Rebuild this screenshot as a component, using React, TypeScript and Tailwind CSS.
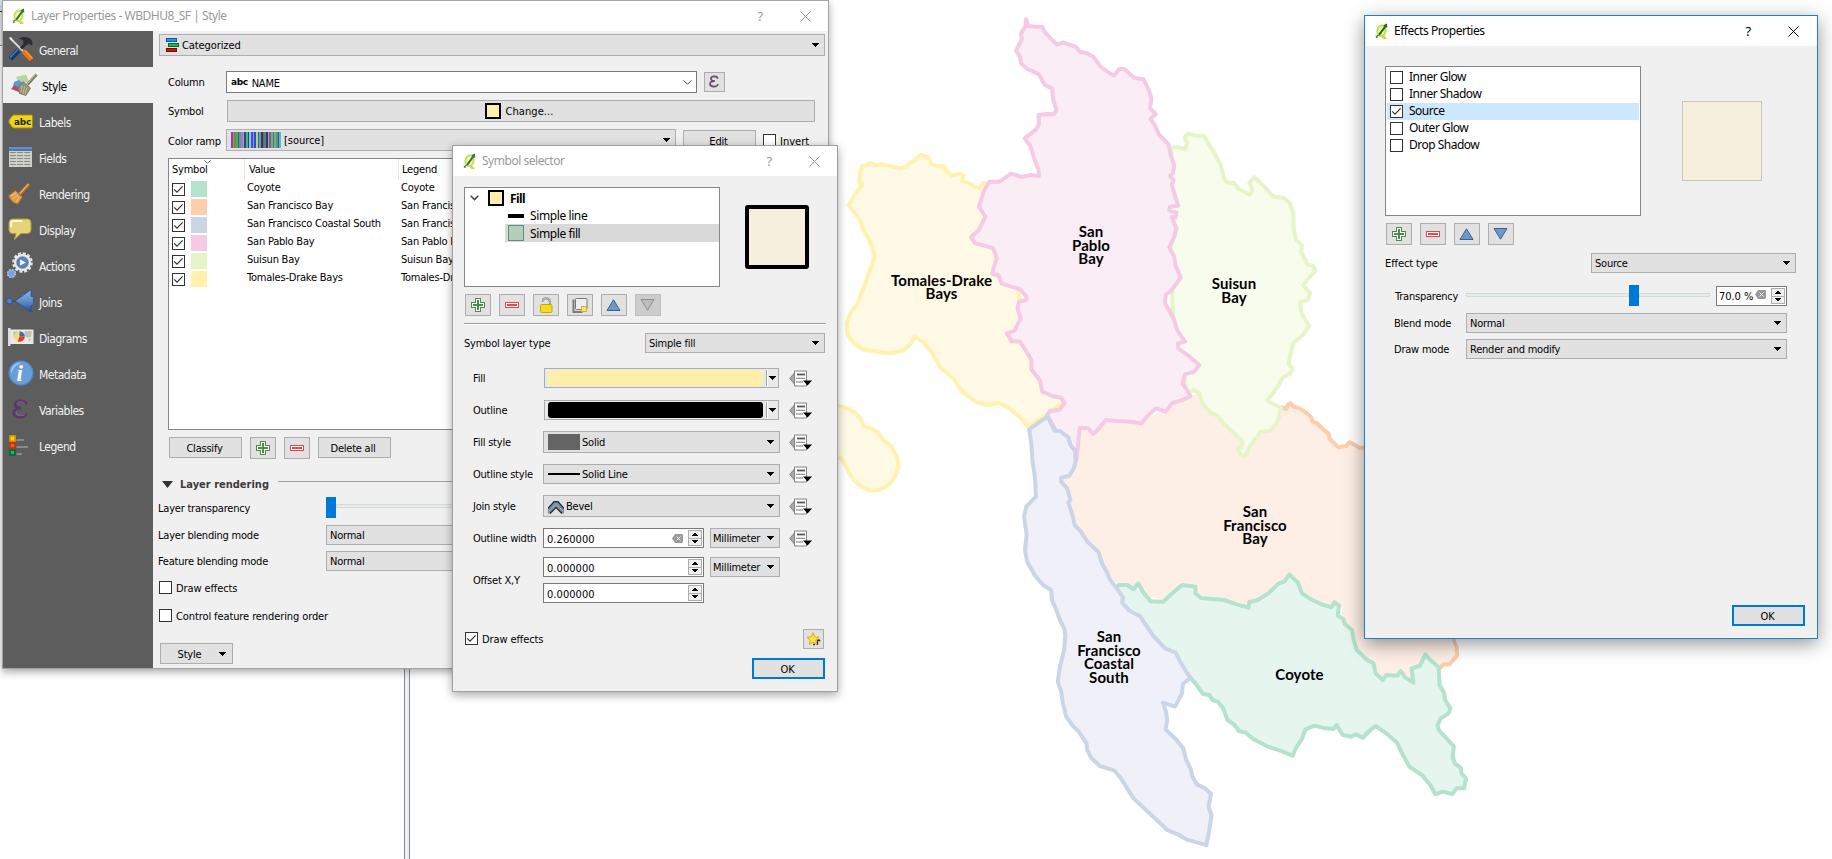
import React from "react";

/* ---------- shared pieces ---------- */

function Caret({ className = "" }: { className?: string }) {
  return (
    <svg className={`block h-1 w-[7px] shrink-0 ${className}`} viewBox="0 0 7 4" shapeRendering="crispEdges">
      <path d="M0 0h7v1h-1v1h-1v1h-1v1h-1v-1h-1v-1h-1v-1h-1z" fill="#000" />
    </svg>
  );
}

function Combo({ className, children }: { className: string; children: React.ReactNode }) {
  return (
    <div className={`flex shrink-0 items-center border border-[#adadad] bg-[#e1e1e1] ${className}`}>
      {children}
      <Caret className="ml-auto" />
    </div>
  );
}

function Button({ className, children }: { className: string; children: React.ReactNode }) {
  return (
    <div className={`flex shrink-0 items-center justify-center border border-[#adadad] bg-[#e1e1e1] ${className}`}>
      {children}
    </div>
  );
}

function Check({ on = false, className = "" }: { on?: boolean; className?: string }) {
  return (
    <span className={`block h-[13px] w-[13px] shrink-0 border border-[#333] bg-white ${className}`}>
      {on && (
        <svg className="block h-[11px] w-[11px]" viewBox="0 0 11 11">
          <path d="M1.2 5.3l2.8 2.8 5.6-5.8" fill="none" stroke="#333" strokeWidth="1.2" />
        </svg>
      )}
    </span>
  );
}

function Logo({ faded = false }: { faded?: boolean }) {
  return (
    <svg className={`block h-[17px] w-[14px] shrink-0 ${faded ? "opacity-90" : ""}`} viewBox="0 0 14 17">
      <ellipse cx="6.500" cy="7.800" rx="4" ry="5.300" transform="rotate(12 6.500 7.800)" fill="#f2f6bd" stroke="#cbdc45" strokeWidth="2.200" />
      <path d="M6 13l2.500 3h3.500l-2.500-3.200z" fill="#c3d63a" />
      <path d="M12 .5l.3 4.300-1.300-.5-5.500 7.400-2.300 1.200.6-2.500 5.600-7.300-1.200-.8z" fill="#1d6b21" />
      <path d="M1 12.500l1.700 2M3 12l-2 3" stroke="#1d4d21" strokeWidth=".9" />
    </svg>
  );
}

function TitleBar({ title, active = false, pad }: { title: string; active?: boolean; pad: string }) {
  const tone = active ? "text-black" : "text-[#999]";
  return (
    <div className={`flex h-[30px] shrink-0 items-center bg-white ${pad} ${tone}`}>
      <Logo faded={!active} />
      <span className="ml-[5px] font-['Noto_Sans',sans-serif] text-[12px] leading-none tracking-[-0.47px] whitespace-pre">{title}</span>
      <span className="ml-auto font-['Noto_Sans',sans-serif] text-[13px] leading-none">?</span>
      <svg className="ml-[37px] block h-[11px] w-[11px]" viewBox="0 0 11 11">
        <path d="M.5.5l10 10M10.500.5l-10 10" stroke="currentColor" strokeWidth="1" />
      </svg>
    </div>
  );
}

function PlusIcon() {
  return (
    <svg className="block h-[14px] w-[14px]" viewBox="0 0 14 14" shapeRendering="crispEdges">
      <path d="M4.500.5h5v4h4v5h-4v4h-5v-4h-4v-5h4z" fill="#fff" stroke="#4d8c4d" />
      <path d="M6 2h2v4h4v2H8v4H6V8H2V6h4z" fill="#4d8c4d" />
    </svg>
  );
}

function MinusIcon() {
  return (
    <svg className="block h-[6px] w-[14px]" viewBox="0 0 14 6" shapeRendering="crispEdges">
      <path d="M.5.5h13v5H.5z" fill="#fff" stroke="#e8474b" />
      <path d="M2 2h10v2H2z" fill="#f0474b" />
    </svg>
  );
}

function Tri({ down = false, off = false }: { down?: boolean; off?: boolean }) {
  return (
    <svg className={`block h-3 w-[15px] ${down ? "rotate-180" : ""}`} viewBox="0 0 15 12">
      <path d="M7.500.8l6.500 10.700H1z" fill={off ? "#bdbdbd" : "#6d98cd"} stroke={off ? "#8e8e8e" : "#3f5f87"} strokeWidth="1" />
    </svg>
  );
}

function LockIcon() {
  return (
    <svg className="block h-4 w-4" viewBox="0 0 16 16">
      <path d="M5 4.800V3.500Q5.500 1 8.500 1.300T12 4.500V8" fill="none" stroke="#8f8f8f" strokeWidth="2.200" />
      <path d="M5 4.800V3.500Q5.500 1 8.500 1.300T12 4.500V8" fill="none" stroke="#c9c9c9" strokeWidth=".8" />
      <rect x="2.500" y="7.500" width="11.500" height="8" rx="1" fill="#f2dc1f" stroke="#c8a800" />
    </svg>
  );
}

function CopyIcon() {
  return (
    <svg className="block h-4 w-4" viewBox="0 0 16 16">
      <path d="M1.500 2.500v12.500h9" fill="none" stroke="#7b7b7b" strokeWidth="2" />
      <rect x="3.500" y="1.500" width="11.500" height="11" rx="1" fill="#efefef" stroke="#777" />
      <rect x="9.500" y="9.500" width="5" height="5" fill="#f8e27a" stroke="#d8b12e" />
    </svg>
  );
}

function DefinedIcon() {
  return (
    <svg className="ml-[9px] block h-[17px] w-6 shrink-0" viewBox="0 0 24 17">
      <path d="M.7 8.500L5.500 2.800v11.400z" fill="#a8a8a8" stroke="#777" strokeWidth=".8" />
      <path d="M5.500 1h12v15h-12z" fill="#fff" stroke="#828282" />
      <path d="M8 4.500h8" stroke="#555" strokeWidth="1.800" />
      <path d="M7 8.300h9M7 12h7" stroke="#777" strokeWidth="1" />
      <path d="M14 10.500h9l-4.500 5z" fill="#000" />
    </svg>
  );
}

function Spinner() {
  return (
    <span className="flex h-[16px] w-[14px] shrink-0 flex-col border border-[#adadad] bg-[#f0f0f0]">
      <svg className="block h-[14px] w-3" viewBox="0 0 12 14" shapeRendering="crispEdges">
        <path d="M5 2h2v1h1v1h1v1H3V4h1V3h1z M3 9h6v1H8v1H7v1H5v-1H4v-1H3z" fill="#000" />
        <path d="M0 7h12" stroke="#adadad" />
      </svg>
    </span>
  );
}

function ClearIcon({ className = "" }: { className?: string }) {
  return (
    <svg className={`block h-[9px] w-[11px] shrink-0 ${className}`} viewBox="0 0 11 9">
      <path d="M0 4.500L3 0h7l1 1v7l-1 1H3z" fill="#9a9a9a" />
      <path d="M4.500 2.500l4 4M8.500 2.500l-4 4" stroke="#eee" strokeWidth="1" />
    </svg>
  );
}

function EpsilonIcon({ className, light = false }: { className: string; light?: boolean }) {
  return (
    <svg className={`block ${className}`} viewBox="0 0 16 20">
      <path
        d="M14 5.500C13.500 1 4 .3 3.200 5.200 3 8 5.500 9.200 9 9.200M9.500 9.400C3.500 9 1.500 11.500 1.600 14c.4 5.500 11.400 5.600 12.800.2"
        fill="none"
        stroke={light ? "#5b3768" : "#654a6b"}
        strokeWidth="2.700"
      />
      <path d="M13 5.200C11 2 6.500 2 5 4.500M4 13c1.200 4.500 8 4.800 9.500 1.500" fill="none" stroke="#9c86a3" strokeWidth=".6" />
    </svg>
  );
}

/* ---------- sidebar ---------- */

const icons: Record<string, React.ReactNode> = {
  General: (
    <svg className="block h-[26px] w-[26px]" viewBox="0 0 26 26">
      <path d="M2 2l13 13" stroke="#d9d9d9" strokeWidth="1.800" />
      <path d="M1 1l3 1 1 3-2-1z" fill="#fff" />
      <path d="M24.500 8.500C25 3 20 .5 15.500 1L10.500 2.500l4.500 1.500L15.500 8 12 11.500l2 2L18.500 9l3-1.500 1.500 2z" fill="#2b2d31" />
      <path d="M15.500 15l8 8.500" stroke="#f0720c" strokeWidth="5" />
      <path d="M17 14.500l7.500 8" stroke="#ffb066" strokeWidth="1" />
      <path d="M10.500 14.500L2.500 23" stroke="#123a73" strokeWidth="5" />
      <path d="M10 13.500L2 21.500" stroke="#4a80c4" strokeWidth="1.200" />
    </svg>
  ),
  Style: (
    <svg className="block h-[24px] w-[28px]" viewBox="0 0 28 24">
      <path d="M6 4l10-2.500L19 9 9 11z" fill="#b5d79b" />
      <path d="M4 9l5-2 6 5-6 5-6-3z" fill="#5a98d8" />
      <path d="M1 16l3-3.500 9 3L14 21z" fill="#b94a66" />
      <path d="M13 8.500l7.500 6.500L16 22.500 9.500 20.500 8 15z" fill="#989072" stroke="#716a52" strokeWidth=".7" />
      <path d="M12 12l-1 7M14.500 13l-1.500 8M17 14.500l-2 7" stroke="#c8c1a4" strokeWidth=".8" />
      <path d="M17.500 11.500L26.500 1.500" stroke="#7f7d66" strokeWidth="3" />
      <path d="M17.500 10.500l8.500-9.500" stroke="#c0bda6" strokeWidth="1" />
    </svg>
  ),
  Labels: (
    <svg className="block h-[15px] w-[26px]" viewBox="0 0 26 15">
      <path d="M5 1h18.500a1 1 0 011 1v11a1 1 0 01-1 1H5L1 9V6z" fill="#f2d417" stroke="#a68d08" />
      <text x="6" y="10.500" fontFamily="DejaVu Sans, sans-serif" fontSize="9" fontWeight="700" fill="#222" textLength="17" lengthAdjust="spacingAndGlyphs">abc</text>
    </svg>
  ),
  Fields: (
    <svg className="block h-[20px] w-[23px]" viewBox="0 0 24 20" preserveAspectRatio="none">
      <path d="M0 0h24v20H0z" fill="#cdd0c8" />
      <path d="M0 0h24v4H0z" fill="#4b78b4" />
      <path d="M0 1h24" stroke="#86abd8" />
      <path d="M1 5.500h22M1 8.500h22M1 11.500h22M1 14.500h22M1 17.500h22" stroke="#858883" strokeWidth="1" strokeDasharray="6 1.500" />
    </svg>
  ),
  Rendering: (
    <svg className="block h-[23px] w-[23px]" viewBox="0 0 23 23">
      <path d="M12 12L21 2" stroke="#a8682a" strokeWidth="3.800" />
      <path d="M11.500 12L20.500 2" stroke="#e5a95f" strokeWidth="1.800" />
      <path d="M7.500 8.500l7 6.500L10 22C6 22 2 18 .7 13.500z" fill="#dd9c4c" stroke="#a06a26" />
      <path d="M3 14l5-3M5 17l5-4M8 20l3-5" stroke="#f3cb94" strokeWidth=".9" />
    </svg>
  ),
  Display: (
    <svg className="block h-[23px] w-[24px]" viewBox="0 0 24 23">
      <path d="M4.500 1h15Q23 1 23 5v6.500q0 4-3.500 4H13L6.500 21.500l1.500-6H4.500q-3.500 0-3.500-4V5q0-4 3.500-4z" fill="#e5d377" stroke="#b39d3d" />
      <path d="M3 9V5.500Q3 3 6 3h8" fill="none" stroke="#fff9d8" strokeWidth="2" />
    </svg>
  ),
  Actions: (
    <svg className="block h-[27px] w-[26px]" viewBox="0 0 26 27">
      <circle cx="15.500" cy="10.500" r="9.200" fill="none" stroke="#e3e3e3" strokeWidth="2.200" strokeDasharray="3 1.817" />
      <circle cx="15.500" cy="10.500" r="7.800" fill="#dadada" stroke="#efefef" strokeWidth="1.500" />
      <circle cx="15.500" cy="10.500" r="5.600" fill="#5585c4" stroke="#3d659c" strokeWidth=".8" />
      <path d="M13 7.500l6 3-6 3z" fill="#fff" />
      <circle cx="4.500" cy="21.500" r="3.900" fill="#73a2dc" stroke="#b8c4d4" strokeWidth="1.400" strokeDasharray="2 1.060" />
    </svg>
  ),
  Joins: (
    <svg className="block h-[24px] w-[28px]" viewBox="0 0 28 24">
      <defs>
        <linearGradient id="join" x1="0" y1="0" x2="0" y2="1">
          <stop offset="0" stopColor="#8fb6e6" />
          <stop offset=".5" stopColor="#5e90d0" />
          <stop offset="1" stopColor="#1f4e93" />
        </linearGradient>
      </defs>
      <circle cx="3.500" cy="12" r="3" fill="#4f82c2" stroke="#234c85" strokeWidth=".8" />
      <path d="M6 12h4" stroke="#234c85" />
      <path d="M9 12L25 .8V7.500h2.400v9H25v6.700z" fill="url(#join)" stroke="#264f88" strokeWidth=".7" />
    </svg>
  ),
  Diagrams: (
    <svg className="block h-[18px] w-[26px]" viewBox="0 0 26 18">
      <path d="M2 1.500h23.500v14.500H2z" fill="#e9e9e6" />
      <path d="M5 4l4-1 0 5-3 2zM17 3l7 0-1 6-4 1-3-3zM20 11l3 0-1 3z" fill="#c2c2bd" />
      <path d="M0 0h2.500v18H0z" fill="#dcdcdc" />
      <circle cx="11.500" cy="8.500" r="5.300" fill="#f5dc72" />
      <path d="M11.500 8.500V3.200a5.300 5.300 0 015.300 5.300z" fill="#3f6eb5" />
      <path d="M11.500 8.500h5.300a5.300 5.300 0 01-7 5z" fill="#dd3b2f" />
    </svg>
  ),
  Metadata: (
    <svg className="block h-[26px] w-[26px]" viewBox="0 0 26 26">
      <circle cx="13" cy="13" r="12" fill="#6b9ed6" stroke="#4c86c6" strokeWidth="1.200" />
      <path d="M3 14C2 6 8 2 14 2.500 8 4 5 8 3 14z" fill="#a8c9ee" />
      <text x="8.500" y="20.500" fontFamily="Liberation Serif, serif" fontSize="23" fontWeight="700" fontStyle="italic" fill="#fff">i</text>
    </svg>
  ),
  Variables: <EpsilonIcon light className="h-[20px] w-[16px]" />,
  Legend: (
    <svg className="block h-[21px] w-[19px]" viewBox="0 0 19 21">
      <path d="M7.500 5H15M7.500 12h11.500M7.500 19H13" stroke="#9a9a9a" strokeWidth="1.600" />
      <rect x="1" y="1" width="5" height="5" fill="#ffdf00" stroke="#e6960c" strokeWidth="1.600" />
      <rect x="1" y="8" width="5" height="5" fill="#ff5a1a" stroke="#c23205" strokeWidth="1.600" />
      <rect x="1" y="15" width="5" height="5" fill="#20b46a" stroke="#06663a" strokeWidth="1.600" />
    </svg>
  ),
};

const iconPad: Record<string, string> = {
  General: "pl-[5px]",
  Style: "pl-[7px]",
  Labels: "pl-[5px]",
  Fields: "pl-[6px]",
  Rendering: "pl-[5px]",
  Display: "pl-[5px]",
  Actions: "pl-1",
  Joins: "pl-[3px]",
  Diagrams: "pl-[5px]",
  Metadata: "pl-[5px]",
  Variables: "pl-[9px]",
  Legend: "pl-[6px]",
};

function Sidebar() {
  return (
    <div className="w-[150px] shrink-0 bg-[#5d5d5d] text-[#f2f2f2]">
      {Object.keys(icons).map((name) => (
        <div key={name} className={`flex h-9 items-center ${name === "Style" ? "bg-[#f0f0f0] text-black" : ""}`}>
          <div className={`shrink-0 ${iconPad[name]} ${name === "Style" ? "w-[39px]" : "w-9"}`}>{icons[name]}</div>
          <span className="pt-1 text-[12px] tracking-[-0.5px]">{name}</span>
        </div>
      ))}
    </div>
  );
}

/* ---------- layer properties ---------- */

const classes = [
  ["Coyote", "bg-[#b3e2cd]"],
  ["San Francisco Bay", "bg-[#fdcdac]"],
  ["San Francisco Coastal South", "bg-[#cbd5e8]"],
  ["San Pablo Bay", "bg-[#f4cae4]"],
  ["Suisun Bay", "bg-[#e6f5c9]"],
  ["Tomales-Drake Bays", "bg-[#fff2ae]"],
];

const rampColors = [
  "#c21fc8", "#5bbf4e", "#7a8a2a", "#2fb67a", "#b0342a", "#29b0b6", "#e05bd2", "#5ccf7c", "#2b3fae", "#4abf52",
  "#3a2fc0", "#6fdcc0", "#7a2fe0", "#48b7d8", "#3a4ad0", "#9fe07a", "#a02ad8", "#38c46a", "#302f9f", "#d03a4f",
  "#2fa04a", "#3a2ab0", "#8aa8ef", "#c04f2f", "#3fc0a8", "#2f6fd0", "#b89a2f", "#2f9fb0", "#7030c0", "#46c8b0",
];

function ColorRamp() {
  return (
    <svg className="ml-1 block h-4 w-[50px]" viewBox="0 0 60 16" preserveAspectRatio="none" shapeRendering="crispEdges">
      {rampColors.map((c, i) => (
        <rect key={i} x={i * 2} width="2" height="16" fill={c} />
      ))}
    </svg>
  );
}

function Swatch() {
  return <span className="block h-4 w-4 shrink-0 border-2 border-black bg-[#ffefab]" />;
}

function LayerProperties() {
  return (
    <section className="absolute top-0 left-[2px] flex h-[669px] w-[827px] flex-col border border-[#a3a3a3] bg-[#f0f0f0] shadow-[0_3px_8px_rgba(0,0,0,0.35)]">
      <TitleBar title="Layer Properties - WBDHU8_SF | Style" pad="pl-[9px] pr-[17px]" />
      <div className="flex min-h-0 flex-1">
        <Sidebar />
        <div className="flex min-w-0 flex-1 flex-col">
          <Combo className="mt-[3px] ml-[6px] h-[22px] w-[666px] pr-[5px] pl-[6px]">
            <svg className="block h-[14px] w-[13px]" viewBox="0 0 13 14" shapeRendering="crispEdges">
              <path d="M.5.5h10v3H.5z" fill="#19a0c8" stroke="#1652b4" />
              <path d="M2.500 5.500h10v3h-10z" fill="#20b45e" stroke="#066a32" />
              <path d="M.5 10.500h10v3H.5z" fill="#c4170e" stroke="#7a0b06" />
            </svg>
            <span className="ml-[3px] tracking-[-0.1px]">Categorized</span>
          </Combo>

          <div className="mt-[15px] ml-[15px] flex h-[22px] items-center">
            <span className="w-[58px]">Column</span>
            <div className="flex h-[22px] w-[471px] items-center border border-[#7a7a7a] bg-white pr-1 pl-1">
              <span className="font-['DejaVu_Sans',sans-serif] text-[9px] font-bold tracking-[-0.4px]">abc</span>
              <span className="ml-1 pt-[2px]">NAME</span>
              <svg className="ml-auto block h-[5px] w-[9px]" viewBox="0 0 9 5">
                <path d="M.5.3l4 4 4-4" fill="none" stroke="#444" />
              </svg>
            </div>
            <Button className="ml-[7px] h-5 w-[21px] pr-px pb-px">
              <EpsilonIcon className="h-[13px] w-[10px]" />
            </Button>
          </div>

          <div className="mt-[7px] ml-[15px] flex h-[22px] items-center">
            <span className="w-[59px]">Symbol</span>
            <Button className="h-[22px] w-[588px] pr-[3px]">
              <Swatch />
              <span className="ml-1 tracking-[0.1px]">Change...</span>
            </Button>
          </div>

          <div className="mt-[7px] ml-[15px] flex h-[23px] items-start">
            <span className="w-[58px] pt-[6px]">Color ramp</span>
            <Combo className="h-[22px] w-[450px] pr-[5px]">
              <ColorRamp />
              <span className="ml-[3px] tracking-[-0.05px]">[source]</span>
            </Combo>
            <Button className="mt-px ml-[7px] h-[22px] w-[73px] pr-[2px]">Edit</Button>
            <Check className="mt-[5px] ml-[7px]" />
            <span className="ml-1 pt-[6px] tracking-[0px]">Invert</span>
          </div>

          <div className="mt-[6px] ml-[15px] h-[272px] w-[650px] border border-[#828790] bg-white">
            <div className="flex h-[21px] items-center">
              <div className="relative flex h-full w-[76px] items-center border-r border-[#e5e5e5] pl-[3px]">
                Symbol
                <svg className="absolute top-px left-[35px] block h-1 w-[7px]" viewBox="0 0 7 4">
                  <path d="M.3.3l3.200 3L6.700.3" fill="none" stroke="#777" />
                </svg>
              </div>
              <div className="flex h-full w-[154px] items-center border-r border-[#e5e5e5] pl-1">Value</div>
              <div className="pl-[3px]">Legend</div>
            </div>
            {classes.map(([name, color]) => (
              <div key={name} className="flex h-[18px] items-start whitespace-nowrap">
                <Check on className="mt-[3px] ml-[3px]" />
                <span className={`mt-px ml-[6px] block h-4 w-4 ${color}`} />
                <span className="ml-10 w-[154px] pt-px">{name}</span>
                <span className="pt-px">{name}</span>
              </div>
            ))}
          </div>

          <div className="mt-[7px] ml-4 flex items-start">
            <Button className="h-[21px] w-[73px] pt-px pr-[2px]">Classify</Button>
            <Button className="ml-2 h-[22px] w-[26px]"><PlusIcon /></Button>
            <Button className="ml-2 h-[22px] w-[26px]"><MinusIcon /></Button>
            <Button className="ml-2 h-[21px] w-[73px] pt-px pr-[3px]">Delete all</Button>
          </div>

          <div className="mt-[17px] ml-[9px] flex h-4 items-center">
            <svg className="block h-[7px] w-[11px]" viewBox="0 0 11 7">
              <path d="M0 0h11L5.500 7z" fill="#333" />
            </svg>
            <span className="ml-[7px] w-[98px] font-bold tracking-[0px] text-[#3b3b3b]">Layer rendering</span>
            <span className="mb-[5px] block h-px w-[540px] bg-[#a0a0a0]" />
          </div>

          <div className="mt-[5px] ml-[5px] flex h-[21px] items-center">
            <span className="w-[168px] pt-[2px]">Layer transparency</span>
            <span className="block h-[21px] w-[10px] bg-[#0078d7]" />
            <span className="-mt-1 block h-1 w-[480px] border border-[#d3dada] bg-[#e9ecec]" />
          </div>
          <div className="mt-[7px] ml-[5px] flex h-5 items-center">
            <span className="w-[168px]">Layer blending mode</span>
            <Combo className="h-5 w-[490px] pr-[5px] pl-[3px]">Normal</Combo>
          </div>
          <div className="mt-[6px] ml-[5px] flex h-5 items-center">
            <span className="w-[168px]">Feature blending mode</span>
            <Combo className="h-5 w-[490px] pr-[5px] pl-[3px]">Normal</Combo>
          </div>
          <div className="mt-[10px] ml-[6px] flex h-[13px] items-center"><Check /><span className="ml-1 pt-px tracking-[-0.1px]">Draw effects</span></div>
          <div className="mt-[15px] ml-[6px] flex h-[13px] items-center"><Check /><span className="ml-1 pt-px tracking-[-0.1px]">Control feature rendering order</span></div>
          <Button className="mt-[21px] ml-[7px] h-[21px] w-[73px] pl-[11px]">
            <span className="pt-px">Style</span>
            <Caret className="ml-[18px]" />
          </Button>
        </div>
      </div>
    </section>
  );
}

/* ---------- symbol selector ---------- */

function Row({ label, top, height = "h-[22px]", children }: { label: string; top: string; height?: string; children: React.ReactNode }) {
  return (
    <div className={`ml-5 flex items-center ${top} ${height}`}>
      <span className="w-[70px] shrink-0">{label}</span>
      {children}
    </div>
  );
}

function ColorButton({ color }: { color: string }) {
  return (
    <div className="mr-px ml-px flex h-5 w-[235px] items-center border border-[#adadad] bg-[#e9e9e9] pl-[3px]">
      <span className={`block h-4 w-[215px] rounded-[3px] ${color}`} />
      <span className="ml-[3px] block h-4 w-px bg-[#a0a0a0]" />
      <span className="flex h-[18px] flex-1 items-center border-l border-white pl-px"><Caret /></span>
    </div>
  );
}

function SpinField({ value, clear = false }: { value: string; clear?: boolean }) {
  return (
    <div className="flex h-5 w-[161px] items-center border border-[#7a7a7a] bg-white pr-px pl-[3px]">
      <span className="pt-[2px] tracking-[0.05px]">{value}</span>
      <span className="flex-1" />
      {clear && <ClearIcon className="mr-[5px]" />}
      <Spinner />
    </div>
  );
}

function SymbolSelector() {
  return (
    <section className="absolute top-[145px] left-[452px] flex h-[547px] w-[386px] flex-col border border-[#9f9f9f] bg-[#f0f0f0] shadow-[0_3px_9px_rgba(0,0,0,0.35)]">
      <TitleBar title="Symbol selector" pad="pl-[10px] pr-[17px]" />

      <div className="flex">
        <div className="mt-[11px] ml-[11px] h-[100px] w-[256px] border border-[#828790] bg-white font-['Noto_Sans',sans-serif] text-[12px] tracking-[-0.4px]">
          <div className="mt-px flex h-[18px] items-center pl-[5px]">
            <svg className="block h-[6px] w-[9px]" viewBox="0 0 9 6"><path d="M.7.8l3.800 3.800L8.300.8" fill="none" stroke="#444" strokeWidth="1.500" /></svg>
            <span className="ml-[9px]"><Swatch /></span>
            <span className="ml-[6px] font-bold tracking-[-0.6px]">Fill</span>
          </div>
          <div className="flex h-[17px] items-center pl-[43px]">
            <span className="block h-1 w-4 bg-black" />
            <span className="ml-[6px]">Simple line</span>
          </div>
          <div className="ml-10 flex h-[18px] items-center bg-[#d9d9d9] pl-[3px]">
            <span className="block h-4 w-4 border border-[#5f8a85] bg-[#b3cdbb]" />
            <span className="ml-[6px]">Simple fill</span>
          </div>
        </div>
        <div className="mt-[29px] ml-[25px] h-16 w-16 rounded-[3px] border-4 border-black bg-[#f5efdc]" />
      </div>

      <div className="mt-[7px] ml-3 flex gap-2">
        <Button className="h-[22px] w-[26px]"><PlusIcon /></Button>
        <Button className="h-[22px] w-[26px]"><MinusIcon /></Button>
        <Button className="h-[22px] w-[26px]"><LockIcon /></Button>
        <Button className="h-[22px] w-[26px]"><CopyIcon /></Button>
        <Button className="h-[22px] w-[26px] pr-px"><Tri /></Button>
        <div className="flex h-[22px] w-[26px] items-center justify-center border border-[#bfbfbf] bg-[#cccccc] pr-px"><Tri down off /></div>
      </div>

      <div className="mt-[7px] ml-[11px] h-[2px] w-[362px] border-b border-white bg-[#a0a0a0]" />

      <div className="mt-2 ml-[11px] flex h-5 items-center">
        <span className="w-[181px]">Symbol layer type</span>
        <Combo className="h-5 w-[180px] pr-[5px] pl-[3px]">Simple fill</Combo>
      </div>

      <Row label="Fill" top="mt-[15px]" height="h-5"><ColorButton color="bg-[#ffefab]" /><DefinedIcon /></Row>
      <Row label="Outline" top="mt-3" height="h-5"><ColorButton color="bg-black" /><DefinedIcon /></Row>
      <Row label="Fill style" top="mt-[11px]">
        <Combo className="h-[22px] w-[237px] pr-[5px] pl-1">
          <span className="mr-[2px] block h-4 w-8 bg-[#646464]" />Solid
        </Combo>
        <DefinedIcon />
      </Row>
      <Row label="Outline style" top="mt-[11px]" height="h-5">
        <Combo className="h-5 w-[237px] pr-[5px] pl-1">
          <span className="mr-[2px] block h-[2px] w-8 bg-black" />Solid Line
        </Combo>
        <DefinedIcon />
      </Row>
      <Row label="Join style" top="mt-[11px]">
        <Combo className="h-[22px] w-[237px] pr-[5px] pl-1">
          <svg className="mt-[3px] mr-[2px] block h-[13px] w-4" viewBox="0 0 16 13">
            <path d="M0 12.500V7.500L6 .7h4l6 6.800v5h-2L8 6.500 2 12.500z" fill="#6f90b4" />
            <path d="M0 7.500L6 .7h4l6 6.800M2 12.500L8 6.500l6 6" fill="none" stroke="#1d2830" strokeWidth="1.200" />
            <path d="M1 10l7-6.500L15 10" fill="none" stroke="#dcc43c" strokeWidth="1" strokeDasharray="2 1" />
          </svg>
          Bevel
        </Combo>
        <DefinedIcon />
      </Row>
      <Row label="Outline width" top="mt-[11px]" height="h-5">
        <SpinField value="0.260000" clear />
        <Combo className="ml-[6px] h-5 w-[70px] pr-[5px] pl-[2px]">Millimeter</Combo>
        <DefinedIcon />
      </Row>
      <Row label="Offset X,Y" top="mt-[9px]" height="h-[46px]">
        <div className="flex flex-col gap-[6px]">
          <SpinField value="0.000000" />
          <SpinField value="0.000000" />
        </div>
        <Combo className="ml-[6px] h-5 w-[70px] self-start pr-[5px] pl-[2px]">Millimeter</Combo>
      </Row>

      <div className="mt-[26px] ml-3 flex h-5 items-center">
        <Check on className="-mt-px" />
        <span className="ml-1 tracking-[-0.1px]">Draw effects</span>
        <Button className="ml-auto mr-[13px] h-5 w-[21px]">
          <svg className="block h-[14px] w-[15px]" viewBox="0 0 15 14">
            <path d="M11.500 13V8.500l2-.8M7 12.500h2M13 7.800l1 1.500" stroke="#333" strokeWidth="1.300" fill="none" />
            <path d="M7 .8l1.700 4 4.300.4-3.300 2.900 1 4.300L7 10.200l-3.700 2.200 1-4.300L1 5.200l4.300-.4z" fill="#ffe53b" stroke="#e8a41a" />
          </svg>
        </Button>
      </div>
      <div className="mt-[9px] mr-3 ml-auto flex h-[21px] w-[73px] items-center justify-center border-2 border-[#0078d7] bg-[#e1e1e1] pt-px pr-[2px]">OK</div>
    </section>
  );
}

/* ---------- effects properties ---------- */

const effects = ["Inner Glow", "Inner Shadow", "Source", "Outer Glow", "Drop Shadow"];

function EffectsProperties() {
  return (
    <section className="absolute top-[15px] left-[1364px] flex h-[624px] w-[454px] flex-col border border-[#1a80d0] bg-[#f0f0f0] shadow-[0_5px_18px_rgba(0,0,0,0.42)]">
      <TitleBar title="Effects Properties" active pad="pl-[10px] pr-[18px]" />

      <div className="flex">
        <div className="mt-5 ml-5 h-[150px] w-[256px] border border-[#828790] bg-white px-px pt-[2px] font-['Noto_Sans',sans-serif] text-[12px] tracking-[-0.5px]">
          {effects.map((name) => (
            <div key={name} className={`flex h-[17px] items-center pl-[3px] ${name === "Source" ? "bg-[#cce8ff]" : ""}`}>
              <Check on={name === "Source"} />
              <span className="ml-[6px] pb-[2px]">{name}</span>
            </div>
          ))}
        </div>
        <div className="mt-[55px] ml-[41px] h-20 w-20 border border-[#c9c6b9] bg-[#f5efdc]" />
      </div>

      <div className="mt-[7px] ml-[21px] flex gap-2">
        <Button className="h-[22px] w-[26px]"><PlusIcon /></Button>
        <Button className="h-[22px] w-[26px]"><MinusIcon /></Button>
        <Button className="h-[22px] w-[26px] pr-px"><Tri /></Button>
        <Button className="h-[22px] w-[26px] pr-px"><Tri down /></Button>
      </div>

      <div className="mt-2 ml-5 flex h-5 items-center">
        <span className="w-[206px] tracking-[-0.1px]">Effect type</span>
        <Combo className="h-5 w-[205px] pr-[5px] pl-[3px]">Source</Combo>
      </div>

      <div className="mt-3 ml-[30px] flex h-[21px] items-center">
        <span className="w-[71px] pt-[2px]">Transparency</span>
        <div className="flex h-[21px] w-[244px] items-center">
          <span className="-mt-px block h-1 w-[163px] border border-[#d3dada] bg-[#e9ecec]" />
          <span className="block h-[21px] w-[10px] bg-[#0078d7]" />
          <span className="-mt-px block h-1 w-[71px] border border-[#d3dada] bg-[#e9ecec]" />
        </div>
        <div className="ml-[6px] flex h-5 w-[71px] items-center border border-[#7a7a7a] bg-white pr-px pl-[2px] whitespace-nowrap">
          <span className="w-9 pt-[2px] tracking-[-0.05px]">70.0 %</span>
          <ClearIcon className="-mt-[2px]" />
          <span className="flex-1" />
          <Spinner />
        </div>
      </div>
      <div className="mt-[7px] ml-[29px] flex h-5 items-center">
        <span className="w-[72px]">Blend mode</span>
        <Combo className="h-5 w-[321px] pr-[5px] pl-[3px]">Normal</Combo>
      </div>
      <div className="mt-[6px] ml-[29px] flex h-5 items-center">
        <span className="w-[72px]">Draw mode</span>
        <Combo className="h-5 w-[321px] pr-[5px] pl-[3px]">Render and modify</Combo>
      </div>

      <div className="mt-auto mr-3 mb-3 ml-auto flex h-[21px] w-[73px] items-center justify-center border-2 border-[#0078d7] bg-[#e1e1e1] pt-px pr-[2px]">OK</div>
    </section>
  );
}

/* ---------- map ---------- */

const north = "translate(820 0) scale(.357143 .333333)";
const south = "translate(820 400) scale(.420911 .333333)";

const outline = {
  strokeWidth: 4,
  strokeLinejoin: "round" as const,
  strokeLinecap: "round" as const,
  vectorEffect: "non-scaling-stroke" as const,
};

function Label({ x, y, lines }: { x: number; y: number; lines: string[] }) {
  return (
    <text textAnchor="middle" fontFamily="Lato, sans-serif" fontSize="15" fontWeight="700" letterSpacing="0.1" fill="#000">
      {lines.map((line, i) => (
        <tspan key={line} x={x} y={y + i * 13.6}>{line}</tspan>
      ))}
    </text>
  );
}

function WatershedMap() {
  return (
    <svg className="absolute top-0 left-0 block h-[859px] w-[1832px]" viewBox="0 0 1832 859">
      <g transform={south}>
        <path fill="#feefe6" d="M610 75L680 40 770 60 880-10 930-50 980 60 1050 40 1095 20 1115 12 1140 30 1165 60 1205 100 1230 142 1258 130 1295 145H1500V730L1514 765 1475 805 1400 860 1250 800 1240 620 1000 640 730 580 700 545 660 460 600 370 575 240 608 180z" />
        <path {...outline} fill="none" stroke="#fdcdac" d="M1097 22L1108 27 1112 13 1118 10 1125 20 1140 26 1155 38 1167 52 1170 65 1180 69 1195 87 1209 103 1210 115 1222 130 1232 142 1250 138 1258 127 1275 138 1282 144 1300 142M1503 700L1507 728 1512 740 1514 766 1503 782 1495 793 1481 793 1475 803" />
      </g>
      <g transform={north} fill="#fff9e6" stroke="#fff2ae">
        <path {...outline} d="M118 497L130 497 138 489 155 495 175 493 200 500 225 505 240 500 252 488 265 482 275 470 285 465 303 472 312 492 325 498 345 498 355 513 370 527 390 521 402 527 398 543 412 547 430 558 446 565 456 549 470 552 520 700 580 1000 690 1200 640 1240 582 1280 560 1252 530 1225 500 1209 470 1215 440 1207 400 1177 375 1137 335 1100 315 1060 290 1027 266 1010 255 1030 235 1050 200 1060 160 1055 120 1048 95 1030 77 1003 75 970 85 940 104 913 125 855 154 768 138 720 120 687 112 660 81 616 100 580 119 554 110 545 112 515z" />
      </g>
      <g transform={south} fill="#fff9e6" stroke="#fff2ae">
        <path {...outline} d="M20 15L42 17 65 25 85 40 98 58 104 80 120 84 138 98 152 122 170 140 183 170 186 200 178 232 160 258 140 270 120 272 98 260 80 240 68 215 62 200 50 175 30 165" />
      </g>
      <g transform={north} fill="#f8fced" stroke="#e6f5c9">
        <path {...outline} d="M985 443L1005 441 1022 448 1028 430 1021 412 1030 400 1050 407 1075 407 1090 435 1105 460 1122 495 1130 530 1138 547 1160 549 1172 567 1190 577 1203 584 1211 570 1202 548 1216 532 1230 545 1250 567 1270 590 1300 594 1315 608 1325 640 1326 680 1332 718 1350 738 1347 755 1365 793 1380 797 1388 812 1370 832 1352 855 1373 880 1365 900 1344 906 1348 940 1370 978 1352 1005 1325 1030 1318 1060 1312 1090 1323 1107 1315 1122 1295 1133 1285 1155 1252 1202 1275 1215 1290 1222 1285 1255 1279 1270 1259 1293 1235 1295 1214 1325 1200 1345 1197 1358 1188 1369 1176 1364 1170 1350 1182 1338 1182 1322 1155 1295 1131 1272 1114 1248 1096 1240 1078 1220 1066 1200 1063 1180 1045 1170 1030 1180 990 1000 980 700z" />
      </g>
      <g transform={south} fill="#e6f5ee" stroke="#b3e2cd">
        <path {...outline} d="M710 555L730 555 745 568 756 550 768 577 785 604 815 605 840 577 860 555 892 560 892 580 905 594 960 600 990 613 1018 623 1020 606 1040 600 1065 580 1090 550 1103 545 1115 523 1135 547 1145 580 1170 600 1190 612 1215 622 1222 607 1233 617 1230 647 1243 657 1247 672 1264 690 1268 720 1275 750 1300 780 1315 790 1320 820 1337 840 1345 825 1372 827 1380 813 1390 832 1410 848 1405 805 1425 798 1438 763 1450 780 1470 802 1472 855 1483 880 1485 900 1498 925 1493 940 1475 955 1467 975 1470 990 1490 1017 1506 1040 1503 1070 1508 1090 1522 1103 1524 1120 1535 1135 1530 1165 1512 1165 1502 1182 1480 1175 1462 1183 1450 1155 1430 1125 1400 1100 1385 1065 1370 1027 1345 1000 1320 978 1303 995 1290 1014 1273 1003 1262 1010 1242 1005 1227 975 1220 987 1200 985 1175 977 1153 988 1145 1017 1130 1045 1123 1067 1100 1055 1065 1040 1030 1018 1010 997 995 993 985 975 968 960 958 925 945 905 932 900 925 885 910 882 895 855 880 833 850 800 815 760 770 705 740 665 715 625 700 570z" />
      </g>
      <g transform={north} fill="#fbedf6" stroke="#f4cae4">
        <path {...outline} d="M577 58L583 78 605 80 622 80 630 97 650 120 664 134 682 127 700 135 716 140 728 156 745 158 765 170 785 200 805 215 823 227 838 207 852 207 880 234 906 238 920 268 928 295 924 325 940 342 925 356 940 380 948 402 975 432 983 470 992 497 988 520 980 527 990 540 985 555 995 590 1003 617 980 620 978 632 998 637 995 653 985 652 998 685 992 710 978 742 992 770 995 795 1010 833 985 870 968 885 966 910 990 955 1000 990 1022 1025 1002 1030 1003 1045 1035 1070 1062 1095 1048 1115 1022 1123 1015 1150 1025 1167 1037 1188 1020 1198 985 1210 968 1235 940 1225 915 1250 900 1270 870 1265 830 1263 800 1260 782 1285 765 1302 750 1284 727 1284 725 1305 722 1340 718 1380 700 1340 660 1290 636 1245 645 1232 670 1230 685 1210 675 1193 650 1188 623 1175 615 1140 592 1108 592 1080 578 1055 560 1025 537 1024 523 1000 545 992 562 955 553 925 557 905 578 900 578 890 560 867 535 860 508 850 500 825 482 822 487 800 495 775 485 745 465 738 435 730 423 712 445 690 463 650 445 620 460 570 475 545 503 545 535 521 565 531 590 525 613 528 612 510 598 470 590 440 573 415 605 388 613 373 612 345 635 342 655 343 662 330 652 295 650 265 630 255 612 222 578 205 563 190 560 170 549 152 565 118 563 100 575 80z" />
      </g>
      <g transform={south} fill="#f0f1f8" stroke="#cbd5e8">
        <path {...outline} d="M497 88L541 49 557 92 570 93 590 112 595 135 606 152 607 185 603 205 592 228 573 233 573 245 587 265 595 300 590 308 600 345 605 375 618 392 635 425 662 457 670 490 683 520 690 540 705 565 720 592 718 608 735 632 760 648 777 680 790 705 820 745 845 758 855 783 870 815 880 833 862 852 860 880 850 905 843 920 815 908 822 935 825 960 821 988 845 1017 863 1045 870 1080 880 1105 885 1130 895 1153 915 1165 929 1182 923 1220 930 1245 925 1290 918 1335 895 1327 870 1318 850 1303 825 1290 800 1260 770 1225 745 1195 730 1165 715 1135 700 1112 665 1098 645 1075 635 1050 633 1030 615 995 600 977 585 950 577 910 573 875 565 845 570 800 580 750 583 705 580 685 570 660 560 625 551 600 549 570 530 555 510 525 492 485 487 450 491 405 485 350 490 320 513 290 511 235 505 185 502 130z" />
      </g>
      <Label x={941.500} y={285.500} lines={["Tomales-Drake", "Bays"]} />
      <Label x={1091} y={237} lines={["San", "Pablo", "Bay"]} />
      <Label x={1234} y={289} lines={["Suisun", "Bay"]} />
      <Label x={1255} y={517} lines={["San", "Francisco", "Bay"]} />
      <Label x={1109} y={642} lines={["San", "Francisco", "Coastal", "South"]} />
      <Label x={1299.500} y={680} lines={["Coyote"]} />
    </svg>
  );
}

export default function App() {
  return (
    <main className="relative h-[859px] w-[1832px] overflow-hidden bg-white font-['DejaVu_Sans_Condensed','DejaVu_Sans',sans-serif] text-[11px] leading-[13px] tracking-[-0.22px] text-black">
      <div className="absolute top-0 left-0 h-[46px] w-1 border-b border-[#828790] bg-[#e8e8e8]" />
      <div className="absolute top-0 left-0 h-3 w-1 border-b border-[#333] bg-[#d3e6e6]" />
      <div className="absolute top-0 left-[404px] h-[859px] w-[6px] border-x border-[#828790] bg-[#f0f0f0]" />
      <WatershedMap />
      <LayerProperties />
      <SymbolSelector />
      <EffectsProperties />
    </main>
  );
}
